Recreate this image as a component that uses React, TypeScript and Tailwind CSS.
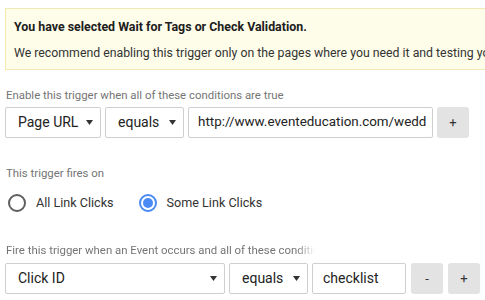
import React from "react";

function Caret() {
  return (
    <svg width="7" height="5" viewBox="0 0 7 5" className="shrink-0">
      <path d="M0 0 L7 0 L3.5 5 Z" fill="#333" />
    </svg>
  );
}

function Select({ label, w }: { label: string; w: string }) {
  return (
    <div
      className={`${w} h-[31px] shrink-0 flex items-center justify-between pl-[12px] pr-[7px] border border-[#cfcfcf] rounded-[2px] bg-white text-[14px] text-[#222] whitespace-nowrap`}
    >
      <span>{label}</span>
      <Caret />
    </div>
  );
}

function Btn({ t }: { t: string }) {
  return (
    <div className="w-[32px] h-[31px] shrink-0 flex items-center justify-center rounded-[3px] bg-[#e3e3e3] text-[13px] text-[#333]">
      {t}
    </div>
  );
}

export default function App() {
  return (
    <div className="w-[485px] h-[300px] overflow-hidden bg-white font-['Roboto',sans-serif] text-[#222] relative">
      <div className="ml-[5px] mt-[8px] w-[500px] h-[62px] bg-[#fefde9] border border-[#f3eab3] pl-[8px] pt-[9px] whitespace-nowrap">
        <div className="text-[12.4px] font-bold leading-[18px] text-[#202020]">
          You have selected Wait for Tags or Check Validation.
        </div>
        <div className="text-[12.3px] leading-[18px] mt-[8px] text-[#333]">
          We recommend enabling this trigger only on the pages where you need it and testing your site
        </div>
      </div>

      <div className="ml-[6px] mt-[18px] text-[11.4px] leading-[14px] text-[#757575] whitespace-nowrap">
        Enable this trigger when all of these conditions are true
      </div>
      <div className="ml-[5px] mt-[5px] flex gap-[4px] items-center">
        <Select label="Page URL" w="w-[96px]" />
        <Select label="equals" w="w-[79px]" />
        <div className="w-[245px] h-[31px] shrink-0 flex items-center pl-[9px] border border-[#cfcfcf] rounded-[2px] bg-white text-[13.4px] text-[#222] overflow-hidden whitespace-nowrap">
          http://www.eventeducation.com/wedd
        </div>
        <Btn t="+" />
      </div>

      <div className="ml-[6px] mt-[28px] text-[11.4px] leading-[14px] text-[#757575]">
        This trigger fires on
      </div>
      <div className="ml-[8px] mt-[14px] flex items-center text-[12.6px] text-[#333] whitespace-nowrap">
        <div className="w-[18px] h-[18px] rounded-full border-2 border-[#5f5f5f] shrink-0" />
        <span className="ml-[10px]">All Link Clicks</span>
        <div className="ml-[25px] w-[18px] h-[18px] rounded-full border-2 border-[#4a8af4] shrink-0 flex items-center justify-center">
          <div className="w-[10px] h-[10px] rounded-full bg-[#4a8af4]" />
        </div>
        <span className="ml-[10px]">Some Link Clicks</span>
      </div>

      <div className="ml-[6px] mt-[30px] w-[309px] overflow-hidden whitespace-nowrap text-[11.4px] leading-[14px] text-[#757575] [mask-image:linear-gradient(to_right,black_94%,transparent)]">
        Fire this trigger when an Event occurs and all of these conditions are true
      </div>
      <div className="ml-[5px] mt-[6px] flex gap-[4px] items-center">
        <Select label="Click ID" w="w-[220px]" />
        <Select label="equals" w="w-[79px]" />
        <div className="w-[94px] h-[31px] shrink-0 flex items-center pl-[10px] border border-[#cfcfcf] rounded-[2px] bg-white text-[14px] text-[#222]">
          checklist
        </div>
        <div className="ml-[1px]"><Btn t="-" /></div>
        <div className="ml-[1px]"><Btn t="+" /></div>
      </div>
    </div>
  );
}
